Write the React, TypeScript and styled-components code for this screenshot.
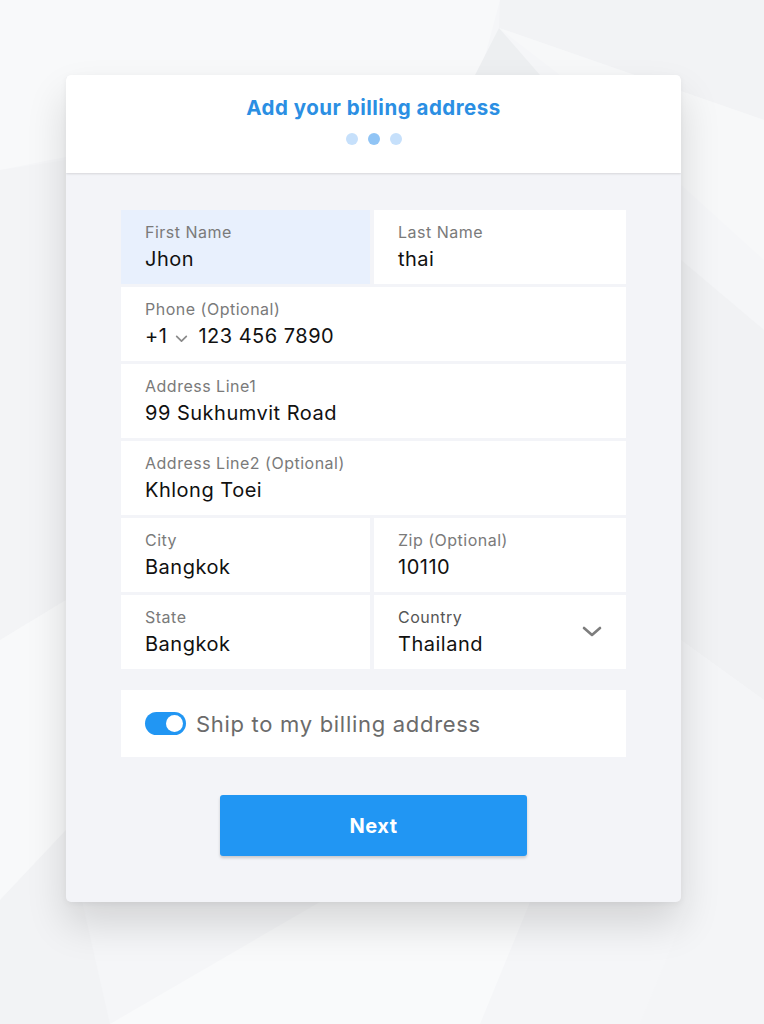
import React from "react";
import styled, { createGlobalStyle } from "styled-components";

const Global = createGlobalStyle`
  html, body { margin: 0; padding: 0; }
  body {
    background: #f5f6f8;
    font-family: Inter, Roboto, "Noto Sans", sans-serif;
    width: 764px;
    height: 1024px;
    overflow: hidden;
  }
`;

const Page = styled.div`
  position: relative;
  width: 764px;
  height: 1024px;
  padding: 75px 0 0 66px;
  box-sizing: border-box;
`;

const Backdrop = styled.svg`
  position: absolute;
  inset: 0;
  width: 764px;
  height: 1024px;
  z-index: 0;
`;

const Card = styled.div`
  position: relative;
  z-index: 1;
  width: 615px;
  border-radius: 5px;
  background: #f3f4f8;
  box-shadow: 0 22px 40px rgba(0, 0, 0, 0.14), 0 2px 6px rgba(0, 0, 0, 0.05);
  overflow: hidden;
`;

const Header = styled.div`
  height: 98px;
  background: #fff;
  box-shadow: 0 1px 2px rgba(0, 0, 0, 0.12);
  display: flex;
  flex-direction: column;
  align-items: center;
  box-sizing: border-box;
  padding-top: 20px;
  position: relative;
  z-index: 1;
`;

const Title = styled.h1`
  margin: 0;
  font-size: 20.5px;
  font-weight: 700;
  color: #2b8fe3;
  line-height: 26px;
  letter-spacing: 0.5px;
`;

const Dots = styled.div`
  display: flex;
  gap: 10px;
  margin-top: 12px;
`;

const Dot = styled.span<{ $active?: boolean }>`
  width: 12px;
  height: 12px;
  border-radius: 50%;
  background: ${(p) => (p.$active ? "#90c4f5" : "#c6e0fb")};
`;

const Body = styled.div`
  padding: 37px 55px 46px;
  display: flex;
  flex-direction: column;
`;

const Fields = styled.div`
  display: grid;
  grid-template-columns: 249px 1fr;
  column-gap: 4px;
  row-gap: 3px;
`;

const Field = styled.div<{ $full?: boolean; $focused?: boolean }>`
  grid-column: ${(p) => (p.$full ? "1 / -1" : "auto")};
  height: 74px;
  box-sizing: border-box;
  background: ${(p) => (p.$focused ? "#e8f0fd" : "#fff")};
  padding: 12px 24px 0 24px;
  display: flex;
  align-items: center;
  justify-content: space-between;
`;

const FieldText = styled.div`
  display: flex;
  flex-direction: column;
  align-self: flex-start;
`;

const Label = styled.div<{ $dark?: boolean }>`
  font-size: 16px;
  line-height: 20px;
  letter-spacing: 0.5px;
  color: ${(p) => (p.$dark ? "#555" : "#7a7a7a")};
`;

const Value = styled.div`
  font-size: 20px;
  line-height: 28px;
  letter-spacing: 0.5px;
  margin-top: 3px;
  color: #111;
  display: flex;
  align-items: center;
`;

const PhoneChevron = styled.svg`
  width: 15px;
  height: 15px;
  margin: 4px 9px 0 7px;
`;

const SelectChevron = styled.svg`
  width: 20px;
  height: 20px;
  margin-top: -12px;
`;

const ToggleRow = styled.label`
  margin-top: 21px;
  height: 67px;
  background: #fff;
  display: flex;
  align-items: center;
  padding: 0 24px;
  gap: 10px;
`;

const Switch = styled.span`
  width: 41px;
  height: 23px;
  border-radius: 12px;
  background: #2196f3;
  position: relative;
  flex: none;
`;

const Knob = styled.span`
  position: absolute;
  right: 3px;
  top: 3px;
  width: 17px;
  height: 17px;
  border-radius: 50%;
  background: #fff;
`;

const ToggleText = styled.span`
  font-size: 22px;
  letter-spacing: 0.7px;
  color: #6b6b6b;
`;

const NextButton = styled.button`
  align-self: center;
  margin-top: 38px;
  width: 307px;
  height: 61px;
  border: none;
  border-radius: 3px;
  background: #2196f3;
  color: #fff;
  font-family: Inter, Roboto, sans-serif;
  font-size: 20px;
  font-weight: 700;
  letter-spacing: 0.5px;
  box-shadow: 0 2px 3px rgba(0, 0, 0, 0.18);
  cursor: pointer;
`;

const Chevron = ({ size }: { size: "sm" | "lg" }) =>
  size === "sm" ? (
    <PhoneChevron viewBox="0 0 14 14">
      <path d="M2.5 5l4.5 4.5 4.5-4.5" fill="none" stroke="#8a8a8a" strokeWidth="1.6" strokeLinecap="round" strokeLinejoin="round" />
    </PhoneChevron>
  ) : (
    <SelectChevron viewBox="0 0 20 20">
      <path d="M2 6l8 7 8-7" fill="none" stroke="#7d7d7d" strokeWidth="2.6" strokeLinecap="round" strokeLinejoin="round" />
    </SelectChevron>
  );

type F = { label: string; value: React.ReactNode; full?: boolean; focused?: boolean; select?: boolean };

const fields: F[] = [
  { label: "First Name", value: "Jhon", focused: true },
  { label: "Last Name", value: "thai" },
  {
    label: "Phone (Optional)",
    full: true,
    value: (
      <>
        +1
        <Chevron size="sm" />
        123 456 7890
      </>
    ),
  },
  { label: "Address Line1", value: "99 Sukhumvit Road", full: true },
  { label: "Address Line2 (Optional)", value: "Khlong Toei", full: true },
  { label: "City", value: "Bangkok" },
  { label: "Zip (Optional)", value: "10110" },
  { label: "State", value: "Bangkok" },
  { label: "Country", value: "Thailand", select: true },
];

export default function App() {
  return (
    <>
      <Global />
      <Page>
        <Backdrop viewBox="0 0 764 1024" preserveAspectRatio="none">
          <rect width="764" height="1024" fill="#f5f6f8" />
          <polygon points="0,0 500,0 480,75 0,170" fill="#f8f9fa" />
          <polygon points="500,0 764,0 764,120 499,28" fill="#f2f3f5" />
          <polygon points="499,28 475,75 540,75" fill="#edeff1" />
          <polygon points="499,28 764,120 764,260 560,75" fill="#f7f8f9" />
          <polygon points="0,170 66,160 66,600 0,640" fill="#f3f4f6" />
          <polygon points="0,640 66,600 66,900 0,1024" fill="#f8f9fa" />
          <polygon points="681,260 764,330 764,700 681,640" fill="#f1f2f4" />
          <polygon points="681,640 764,700 764,1024 640,1024 690,902" fill="#f4f5f7" />
          <polygon points="110,1024 320,902 530,902 480,1024" fill="#f9fafb" />
          <polygon points="0,1024 0,900 66,830 110,1024" fill="#f2f3f5" />
        </Backdrop>
        <Card>
          <Header>
            <Title>Add your billing address</Title>
            <Dots>
              <Dot />
              <Dot $active />
              <Dot />
            </Dots>
          </Header>
          <Body>
            <Fields>
              {fields.map((f) => (
                <Field key={f.label} $full={f.full} $focused={f.focused}>
                  <FieldText>
                    <Label $dark={f.select}>{f.label}</Label>
                    <Value>{f.value}</Value>
                  </FieldText>
                  {f.select && <Chevron size="lg" />}
                </Field>
              ))}
            </Fields>
            <ToggleRow>
              <Switch>
                <Knob />
              </Switch>
              <ToggleText>Ship to my billing address</ToggleText>
            </ToggleRow>
            <NextButton>Next</NextButton>
          </Body>
        </Card>
      </Page>
    </>
  );
}
